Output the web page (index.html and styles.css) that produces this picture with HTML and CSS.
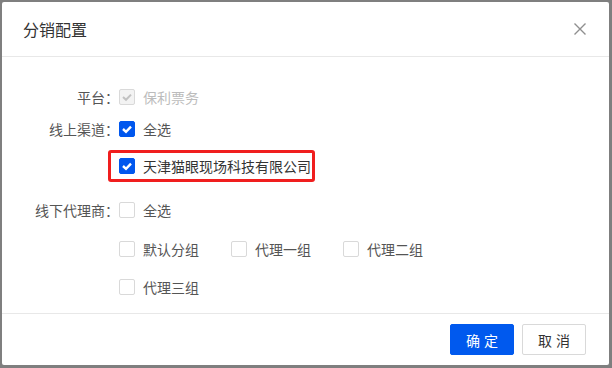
FILE: index.html
```html
<!DOCTYPE html>
<html lang="zh-CN">
<head>
<meta charset="utf-8">
<title>分销配置</title>
<link rel="stylesheet" href="styles.css">
</head>
<body>
<div class="modal">
  <div class="modal-header">
    <span class="modal-title">分销配置</span>
    <span class="modal-close">
      <svg width="14" height="14" viewBox="0 0 14 14"><path d="M1.5 1.5 L12.5 12.5 M12.5 1.5 L1.5 12.5" stroke="#8f8f8f" stroke-width="1.4" fill="none"/></svg>
    </span>
  </div>
  <div class="modal-body">
    <div class="row r1">
      <div class="label">平台：</div>
      <div class="field">
        <label class="cb disabled">
          <span class="box"><svg width="16" height="16" viewBox="0 0 16 16"><path d="M4 8 L7 10.8 L12 5.6" stroke="#c2c2c2" stroke-width="2" fill="none"/></svg></span>
          <span class="txt">保利票务</span>
        </label>
      </div>
    </div>
    <div class="row r2">
      <div class="label">线上渠道：</div>
      <div class="field">
        <label class="cb checked">
          <span class="box"><svg width="16" height="16" viewBox="0 0 16 16"><path d="M4 8 L7 10.8 L12 5.6" stroke="#fff" stroke-width="2.4" fill="none"/></svg></span>
          <span class="txt">全选</span>
        </label>
      </div>
    </div>
    <div class="row r3">
      <div class="label"></div>
      <div class="field">
        <label class="cb checked highlight">
          <span class="box"><svg width="16" height="16" viewBox="0 0 16 16"><path d="M4 8 L7 10.8 L12 5.6" stroke="#fff" stroke-width="2.4" fill="none"/></svg></span>
          <span class="txt dark">天津猫眼现场科技有限公司</span>
        </label>
      </div>
    </div>
    <div class="row r4">
      <div class="label">线下代理商：</div>
      <div class="field">
        <label class="cb"><span class="box"></span><span class="txt">全选</span></label>
      </div>
    </div>
    <div class="row r5">
      <div class="label"></div>
      <div class="field group">
        <label class="cb item"><span class="box"></span><span class="txt">默认分组</span></label>
        <label class="cb item"><span class="box"></span><span class="txt">代理一组</span></label>
        <label class="cb item"><span class="box"></span><span class="txt">代理二组</span></label>
      </div>
    </div>
    <div class="row r6">
      <div class="label"></div>
      <div class="field group">
        <label class="cb item"><span class="box"></span><span class="txt">代理三组</span></label>
      </div>
    </div>
  </div>
  <div class="modal-footer">
    <button class="btn primary">确定</button>
    <button class="btn">取消</button>
  </div>
</div>
</body>
</html>
```

FILE: styles.css
```css
html, body {
  margin: 0;
  padding: 0;
}
body {
  width: 612px;
  height: 368px;
  background: #7f7f7f;
  font-family: "Noto Sans CJK SC", "Noto Sans", sans-serif;
  font-size: 14px;
  color: #333;
  overflow: hidden;
}
.modal {
  margin: 2px 0 0 2px;
  width: 607px;
  height: 363px;
  background: #fff;
  border-radius: 2px;
  display: flex;
  flex-direction: column;
}
.modal-header {
  height: 54px;
  border-bottom: 1px solid #e8e8e8;
  display: flex;
  align-items: center;
  justify-content: space-between;
  padding: 0 22px 0 21px;
  flex: none;
}
.modal-title {
  font-size: 16px;
  color: #333;
}
.modal-close {
  display: flex;
  width: 14px;
  height: 14px;
}
.modal-body {
  flex: 1;
  overflow-y: scroll;
  padding: 24px 0 35px 0;
  box-sizing: border-box;
}
.modal-body::-webkit-scrollbar {
  width: 5px;
}
.modal-body::-webkit-scrollbar-track {
  background: #f1f1f1;
}
.modal-body::-webkit-scrollbar-thumb {
  background: #c1c1c1;
}
.row {
  display: flex;
  height: 32px;
  align-items: center;
}
.r3 { margin-top: 5px; }
.r4 { margin-top: 12px; }
.r5 { margin-top: 7px; }
.r6 { margin-top: 6px; }
.label {
  width: 117px;
  text-align: right;
  color: #555;
  flex: none;
}
.field {
  display: flex;
  align-items: center;
}
.cb {
  display: flex;
  align-items: center;
  gap: 8px;
}
.box {
  width: 14px;
  height: 14px;
  border: 1px solid #d9d9d9;
  border-radius: 2px;
  background: #fff;
  display: flex;
  align-items: center;
  justify-content: center;
  box-sizing: content-box;
}
.box svg {
  flex: none;
}
.cb.checked .box {
  background: #0057ee;
  border-color: #0057ee;
}
.cb.disabled .box {
  background: #f3f3f3;
  border-color: #d9d9d9;
}
.txt {
  color: #555;
  line-height: 20px;
}
.cb.disabled .txt {
  color: #bcbcbc;
}
.txt.dark {
  color: #333;
}
.highlight {
  height: 26px;
  border: 3px solid #f01e1e;
  border-radius: 3px;
  padding: 0 1px 0 8px;
  margin-left: -11px;
}
.group .item {
  width: 112px;
}
.modal-footer {
  flex: none;
  height: 51px;
  border-top: 1px solid #e8e8e8;
  display: flex;
  align-items: center;
  justify-content: flex-end;
  gap: 8px;
  padding: 0 23px 0 0;
}
.btn {
  width: 64px;
  height: 31px;
  border: 1px solid #d9d9d9;
  border-radius: 2px;
  background: #fff;
  color: #333;
  font-family: "Noto Sans CJK SC", "Noto Sans", sans-serif;
  font-size: 14px;
  letter-spacing: 4px;
  padding: 0 0 0 4px;
  cursor: pointer;
}
.btn.primary {
  background: #0059ee;
  border-color: #0059ee;
  color: #fff;
}
```
